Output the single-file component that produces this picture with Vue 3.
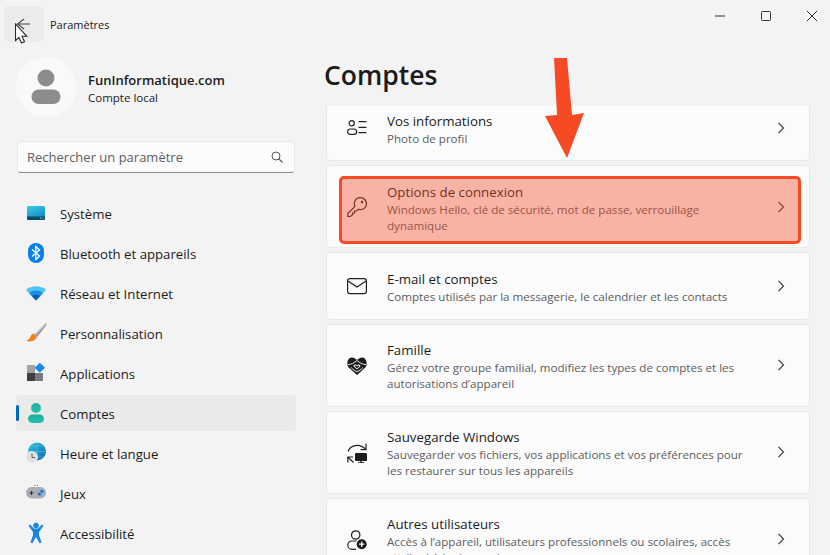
<script setup>
const nav = [
  { id: 'system', label: 'Système' },
  { id: 'bluetooth', label: 'Bluetooth et appareils' },
  { id: 'wifi', label: 'Réseau et Internet' },
  { id: 'brush', label: 'Personnalisation' },
  { id: 'apps', label: 'Applications' },
  { id: 'accounts', label: 'Comptes', active: true },
  { id: 'time', label: 'Heure et langue' },
  { id: 'games', label: 'Jeux' },
  { id: 'access', label: 'Accessibilité' },
]
const cards = [
  { id: 'info', title: 'Vos informations', size: 'first', lines: ['Photo de profil'] },
  { id: 'key', title: 'Options de connexion', size: 'two low', mark: true, lines: ['Windows Hello, clé de sécurité, mot de passe, verrouillage', 'dynamique'] },
  { id: 'mail', title: 'E-mail et comptes', size: 'one low', lines: ['Comptes utilisés par la messagerie, le calendrier et les contacts'] },
  { id: 'family', title: 'Famille', size: 'two', lines: ['Gérez votre groupe familial, modifiez les types de comptes et les', 'autorisations d’appareil'] },
  { id: 'backup', title: 'Sauvegarde Windows', size: 'two', lines: ['Sauvegarder vos fichiers, vos applications et vos préférences pour', 'les restaurer sur tous les appareils'] },
  { id: 'users', title: 'Autres utilisateurs', size: 'two', lines: ['Accès à l’appareil, utilisateurs professionnels ou scolaires, accès', 'attribué à la demande'] },
]
</script>

<template>
  <div class="window">
    <aside class="sidebar">
      <div class="app-bar">
        <button class="back">
          <svg width="40" height="36" viewBox="0 0 40 36"><path d="M26 18H14M20 13l-6.500 5 6.500 5" fill="none" stroke="#444" stroke-width="1.100"/></svg>
        </button>
        <span class="app-name">Paramètres</span>
      </div>
      <div class="profile">
        <div class="avatar">
          <svg width="60" height="60" viewBox="0 0 60 60">
            <circle cx="30" cy="21" r="8.500" fill="#8c8c8c"/>
            <rect x="15.500" y="32.500" width="29" height="14.500" rx="7.250" fill="#8c8c8c"/>
          </svg>
        </div>
        <div class="who">
          <div class="who-name">FunInformatique.com</div>
          <div class="who-type">Compte local</div>
        </div>
      </div>
      <div class="search">
        <span>Rechercher un paramètre</span>
        <svg width="14" height="14" viewBox="0 0 14 14"><circle cx="6" cy="6" r="4" fill="none" stroke="#555" stroke-width="1"/><path d="M9 9l3.500 3.500" stroke="#555" stroke-width="1.100"/></svg>
      </div>
      <nav class="nav">
        <div v-for="item in nav" :key="item.id" class="nav-item" :class="{ active: item.active }">
          <span v-if="item.active" class="indicator"></span>
          <svg class="nav-icon" width="22" height="22" viewBox="0 0 22 22">
            <template v-if="item.id === 'system'">
              <defs><linearGradient id="sys" x1="0" y1="0" x2="0.400" y2="1"><stop offset="0" stop-color="#35d0e2"/><stop offset="1" stop-color="#1a86c8"/></linearGradient></defs>
              <rect x="2" y="4" width="18" height="14" rx="1.500" fill="url(#sys)"/>
              <path d="M2 14.500h18v2a1.500 1.500 0 0 1-1.500 1.500h-15a1.500 1.500 0 0 1-1.500-1.500z" fill="#0b4a68"/>
              <path d="M15 16.200h1.200M17.200 16.200h1.200" stroke="#b9dbe8" stroke-width="0.900"/>
            </template>
            <template v-else-if="item.id === 'bluetooth'">
              <rect x="3" y="1" width="16" height="20" rx="8" fill="#0a80ee"/>
              <path d="M7 7.500l7.500 6.500-3.700 3.500V4.500l3.700 3.500L7 14.500" fill="none" stroke="#fff" stroke-width="1.300"/>
            </template>
            <template v-else-if="item.id === 'wifi'">
              <path d="M1 8C6.500 3 15.500 3 21 8L11 18.500z" fill="#4dc3f2"/>
              <path d="M4 11C8 7.700 14 7.700 18 11L11 18.500z" fill="#1a8fe0"/>
              <path d="M7 14C9.500 12.300 12.500 12.300 15 14L11 18.500z" fill="#0a5ab5"/>
            </template>
            <template v-else-if="item.id === 'brush'">
              <path d="M21 1L9.500 12.500l2.500 2.500L21.500 3z" fill="#8f939a"/>
              <path d="M21 1L9.500 12.500l1 1L21.500 2z" fill="#c3c6ca"/>
              <path d="M9 11.500c-3 .5-3.500 3-4.500 5-.6 1.200-2.500 2-3.500 2.500 3.500 1 9.500.5 10.800-4z" fill="#f2801e"/>
            </template>
            <template v-else-if="item.id === 'apps'">
              <rect x="2" y="3" width="8" height="8" fill="#a0a4a9"/>
              <rect x="2" y="11" width="8" height="8" fill="#3c3f44"/>
              <rect x="10" y="11" width="8" height="8" fill="#767a80"/>
              <path d="M14.800 .8L20 5.800 14.800 10.800 9.600 5.800z" fill="#1a8ae8"/>
            </template>
            <template v-else-if="item.id === 'accounts'">
              <defs><linearGradient id="acc" x1="0" y1="0" x2="0" y2="1"><stop offset="0" stop-color="#1fae9c"/><stop offset="1" stop-color="#25c4ad"/></linearGradient></defs>
              <circle cx="11" cy="6" r="5" fill="url(#acc)"/>
              <rect x="3" y="12.500" width="16" height="8.500" rx="4.250" fill="url(#acc)"/>
            </template>
            <template v-else-if="item.id === 'time'">
              <defs><linearGradient id="glb" x1="0" y1="0" x2="1" y2="1"><stop offset="0" stop-color="#2ec5dc"/><stop offset="1" stop-color="#0f62b8"/></linearGradient></defs>
              <circle cx="12" cy="9.500" r="9" fill="url(#glb)"/>
              <path d="M3 9.500h18M12 .5v18M5.500 4h13M5 15h14" stroke="#5ad0ea" stroke-width="0.500" fill="none"/>
              <circle cx="7" cy="15" r="6" fill="#dfe1e4"/>
              <path d="M7 11.500V15.500H10" fill="none" stroke="#555" stroke-width="1"/>
            </template>
            <template v-else-if="item.id === 'games'">
              <rect x="1" y="5" width="20" height="11.500" rx="5.700" fill="#a9adb4"/>
              <path d="M4.500 11h4M6.500 9v4" stroke="#2d2f33" stroke-width="1.100"/>
              <circle cx="14.500" cy="12" r="1.600" fill="#0f6fd6"/>
              <circle cx="17" cy="9.300" r="1.500" fill="#0f6fd6"/>
              <path d="M9.500 3.500h1M12 3.500h1" stroke="#555" stroke-width="0.900"/>
            </template>
            <template v-else>
              <circle cx="11" cy="3.500" r="2.800" fill="#1a86e0"/>
              <path d="M3.500 3.800L5 2.500 9 6.500h4l4-4 1.500 1.300L14 10v3l2.500 7.500-2 .8L11 15l-3.500 6.300-2-.8L8 13v-3z" fill="#1a86e0"/>
            </template>
          </svg>
          <span class="nav-label">{{ item.label }}</span>
        </div>
      </nav>
    </aside>

    <main class="main">
      <div class="controls">
        <svg width="10" height="10" viewBox="0 0 10 10"><path d="M0 5h10" stroke="#333" stroke-width="1"/></svg>
        <svg width="10" height="10" viewBox="0 0 10 10"><rect x=".5" y=".5" width="9" height="9" rx="1" fill="none" stroke="#333" stroke-width="1"/></svg>
        <svg width="10" height="10" viewBox="0 0 10 10"><path d="M0 0l10 10M10 0L0 10" stroke="#333" stroke-width="1"/></svg>
      </div>
      <h1 class="title">Comptes</h1>
      <div class="viewport">
        <div class="list">
          <article v-for="card in cards" :key="card.id" class="card" :class="card.size">
            <svg class="card-icon" width="20" height="20" viewBox="0 0 20 20" fill="none" stroke="#222" stroke-width="1.200">
              <template v-if="card.id === 'info'">
                <circle cx="4.700" cy="5.300" r="2.600"/>
                <rect x=".6" y="11" width="9" height="5.300" rx="2.600"/>
                <path d="M11.500 3.700H19.500M11.500 9.300H19.500M11.500 14.700H19.500"/>
              </template>
              <template v-else-if="card.id === 'key'">
                <path d="M13.500 .7a6 6 0 0 1 6 6 6 6 0 0 1-6 6 6 6 0 0 1-2-.4L9.500 14H7.500V16H5.500V18L3 19.500H.8V16.500L7.900 9.300a6 6 0 0 1 5.600-8.600z"/>
                <circle cx="15" cy="5" r="1.200" fill="#222" stroke="none"/>
              </template>
              <template v-else-if="card.id === 'mail'">
                <rect x=".6" y="2.600" width="18.800" height="15" rx="2.400"/>
                <path d="M1 5l9 6 9-6"/>
              </template>
              <template v-else-if="card.id === 'family'">
                <path d="M10 19L1.700 11.500C-1 8.500 .5 1.500 4.800 1.500 7.200 1.500 9 3 10 4.300 11 3 12.800 1.500 15.200 1.500 19.500 1.500 21 8.500 18.300 11.500z" fill="#1c1c1c" stroke="none"/>
                <path d="M1 8.500C4.500 8.500 7 7 10 4.500 13 7 15.500 8.500 19 8.500" stroke="#fbfbfb" stroke-width="0.900"/>
                <path d="M4 11.500C6 13.500 8 15 10 15.800 12 15 14 13.500 16 11.500" stroke="#fbfbfb" stroke-width="0.900"/>
                <path d="M10 13.500L6.800 10.500C5.800 9 8.600 7.600 10 9.300 11.400 7.600 14.200 9 13.200 10.500z" fill="#fbfbfb" stroke="none"/>
                <path d="M10 12.500L7.900 10.500C7.400 9.700 9.300 9 10 10.500 10.700 9 12.600 9.700 12.100 10.500z" fill="#1c1c1c" stroke="none"/>
              </template>
              <template v-else-if="card.id === 'backup'">
                <path d="M1 8.500C3 2.500 12 -.5 18.500 6"/>
                <path d="M19 .8V6.700H13.500"/>
                <path d="M.8 19.500V14H6M1 14.200L6.500 19.500"/>
                <rect x="8" y="10" width="12" height="8" rx="1" fill="#1c1c1c" stroke="none"/>
                <path d="M14 18v1.500M11 20H17" stroke="#1c1c1c" stroke-width="1.300"/>
              </template>
              <template v-else>
                <circle cx="8.700" cy="5" r="4.200"/>
                <path d="M9.500 11H5a4.200 4.200 0 0 0 0 8.400H9"/>
                <circle cx="14.700" cy="14.200" r="5" fill="#1c1c1c" stroke="none"/>
                <path d="M14.700 11.500v5.400M12 14.200h5.400" stroke="#fff" stroke-width="1.300"/>
              </template>
            </svg>
            <div class="card-text">
              <div class="card-title">{{ card.title }}</div>
              <div v-for="line in card.lines" :key="line" class="card-sub">{{ line }}</div>
            </div>
            <svg class="chevron" width="8" height="12" viewBox="0 0 8 12"><path d="M1.500 .8L6.500 6 1.500 11.200" fill="none" stroke="#333" stroke-width="1.100"/></svg>
            <div v-if="card.mark" class="mark"></div>
          </article>
        </div>
      </div>
      <svg class="arrow" width="44" height="104" viewBox="0 0 44 104">
        <path d="M9 0L22 0 27 57 39 55 22 100 0 58 12 57z" fill="#f64a24"/>
      </svg>
    </main>

    <svg class="cursor" width="16" height="24" viewBox="0 0 16 24">
      <path d="M1.500 1V17.500L5 14.500 7.500 20 10.500 18.700 8 13.300H12.800z" fill="#fff" stroke="#2b2b2b" stroke-width="1.100"/>
    </svg>
  </div>
</template>

<style>
html, body { margin: 0; background: #f3f3f3; }
</style>

<style scoped>
.window {
  position: relative;
  width: 830px;
  height: 555px;
  overflow: hidden;
  display: flex;
  background: #f3f3f3;
  color: #1b1b1b;
  font-family: "Open Sans", "Noto Sans", sans-serif;
}
.sidebar {
  width: 312px;
  flex: none;
  padding: 0 16px;
  box-sizing: border-box;
}
.app-bar {
  display: flex;
  align-items: center;
  height: 36px;
  margin: 6px 0 0 -12px;
}
.back {
  width: 40px;
  height: 36px;
  padding: 0;
  border: 0;
  border-radius: 5px;
  background: #ebebeb;
}
.back svg { display: block; }
.app-name { margin-left: 6px; font-size: 11px; }
.profile {
  display: flex;
  align-items: center;
  gap: 12px;
  margin-top: 15px;
}
.avatar {
  width: 60px;
  height: 60px;
  border-radius: 50%;
  background: #f9f9f9;
}
.avatar svg { display: block; }
.who { padding-top: 4px; }
.who-name { font-size: 13px; font-weight: 600; line-height: 18px; }
.who-type { font-size: 11.500px; line-height: 18px; }
.search {
  display: flex;
  align-items: center;
  justify-content: space-between;
  width: 278px;
  height: 32px;
  margin: 24px 0 0 1px;
  padding: 0 10px 0 9px;
  box-sizing: border-box;
  background: #fbfbfb;
  border: 1px solid #e8e8e8;
  border-bottom-color: #8d8d8d;
  border-radius: 4px;
  color: #5f5f5f;
  font-size: 13px;
}
.nav { margin-top: 22px; }
.nav-item {
  position: relative;
  display: flex;
  align-items: center;
  height: 36px;
  width: 280px;
  margin-bottom: 4px;
  border-radius: 4px;
  font-size: 13.200px;
}
.nav-label { padding-top: 2px; }
.nav-item.active { background: #eaeaea; }
.indicator {
  position: absolute;
  left: 0;
  top: 10px;
  width: 3px;
  height: 16px;
  border-radius: 2px;
  background: #0067c0;
}
.nav-icon { margin: 0 13px 0 9px; flex: none; }
.main {
  position: relative;
  flex: 1;
  min-width: 0;
  display: flex;
  flex-direction: column;
}
.controls {
  display: flex;
  justify-content: flex-end;
  gap: 36px;
  height: 32px;
  padding: 11px 13px 0 0;
  box-sizing: border-box;
}
.title {
  margin: 24px 0 0 12px;
  font-size: 26.500px;
  line-height: 38px;
  font-weight: 600;
}
.viewport {
  flex: 1;
  min-height: 0;
  overflow: hidden;
  margin: 12px 20px 0 14px;
}
.list {
  display: flex;
  flex-direction: column;
  gap: 4px;
  margin-top: -20px;
}
.card {
  position: relative;
  display: flex;
  align-items: center;
  flex: none;
  padding: 0 24px 0 20px;
  box-sizing: border-box;
  background: #fbfbfb;
  border: 1px solid #e9e9e9;
  border-radius: 4px;
}
.card.first { height: 75px; padding-top: 9px; }
.card.one { height: 68px; }
.card.two { height: 83px; }
.card-icon { flex: none; margin-right: 20px; }
.card-text { flex: 1; min-width: 0; padding-top: 1px; }
.card.first .card-text, .card.low .card-text { padding-top: 3px; }
.card-title { font-size: 13.300px; line-height: 19px; }
.card-sub { font-size: 11.600px; line-height: 16px; color: #5d5d5d; }
.chevron { flex: none; }
.card.two .chevron { margin-bottom: 2px; }
.card.two.low .chevron { margin-bottom: 0; }
.mark {
  position: absolute;
  inset: 10px 8px 3px 12px;
  border: 3px solid #f64a24;
  border-radius: 5px;
  background: rgba(244, 73, 36, 0.4);
}
.arrow {
  position: absolute;
  left: 233px;
  top: 58px;
}
.cursor {
  position: absolute;
  left: 14px;
  top: 23px;
}
</style>
